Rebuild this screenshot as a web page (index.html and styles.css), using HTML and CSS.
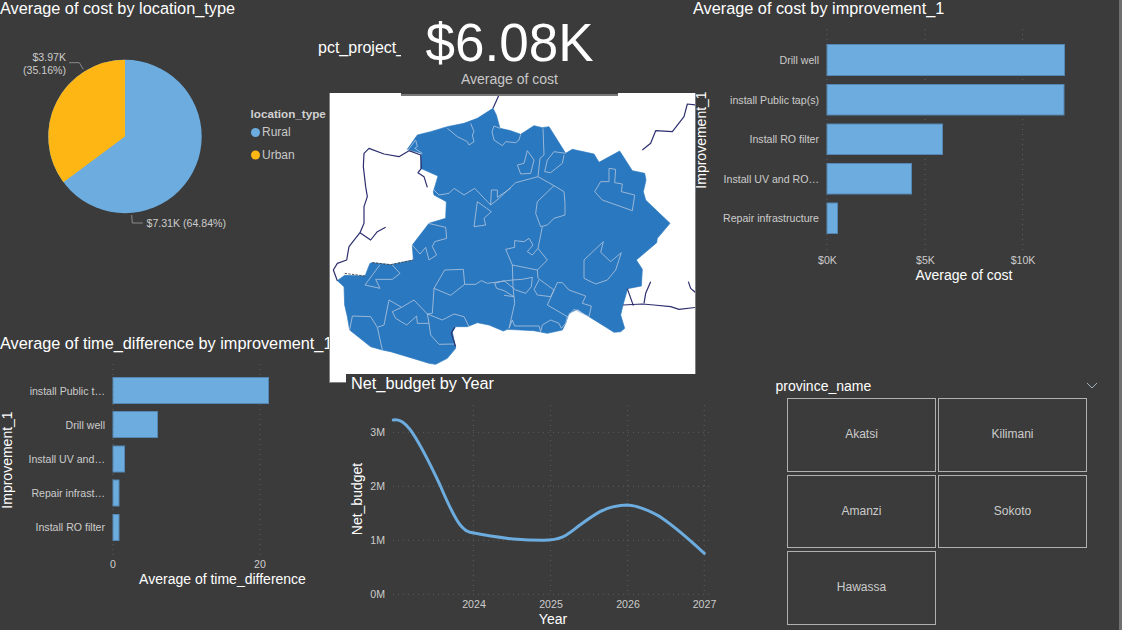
FILE: index.html
```html
<!DOCTYPE html>
<html lang="en">
<head>
<meta charset="utf-8">
<title>Water project dashboard</title>
<link rel="stylesheet" href="styles.css">
</head>
<body>
<main class="dash">

  <section class="tile tile-pie">
    <h2 class="title">Average of cost by location_type</h2>
    <svg class="chart" width="329" height="317" viewBox="0 18 329 317">
      <circle cx="125" cy="136.5" r="76.7" class="fill-blue"/>
      <path d="M125 136.5 L63.4 182.2 A76.7 76.7 0 0 1 125 59.8 Z" class="fill-amber"/>
      <path d="M69 62.7 H79.3 L83.3 69.3" class="leader"/>
      <path d="M131.7 215 L132.3 223 H142.7" class="leader"/>
      <text x="66" y="61" text-anchor="end" class="tick">$3.97K</text>
      <text x="66" y="73.5" text-anchor="end" class="tick">(35.16%)</text>
      <text x="146.5" y="226.5" class="tick">$7.31K (64.84%)</text>
      <text x="250.5" y="118" class="legend-head">location_type</text>
      <circle cx="255.5" cy="132.5" r="4.5" class="fill-blue"/>
      <text x="262" y="136" class="legend">Rural</text>
      <circle cx="255.5" cy="155" r="4.5" class="fill-amber"/>
      <text x="262" y="159" class="legend">Urban</text>
    </svg>
  </section>

  <section class="tile tile-time">
    <h2 class="title">Average of time_difference by improvement_1</h2>
    <svg class="chart" width="329" height="277" viewBox="0 353 329 277">
      <path d="M113 364 V556 M260 364 V556" class="grid"/>
      <rect x="113" y="377.5" width="155.5" height="26" class="bar"/>
      <rect x="113" y="411.5" width="44.5" height="26" class="bar"/>
      <rect x="113" y="446" width="11.5" height="26" class="bar"/>
      <rect x="113" y="480" width="6" height="26" class="bar"/>
      <rect x="113" y="514.5" width="6" height="26" class="bar"/>
      <text x="105" y="395" text-anchor="end" class="tick">install Public t…</text>
      <text x="105" y="429" text-anchor="end" class="tick">Drill well</text>
      <text x="105" y="463" text-anchor="end" class="tick">Install UV and…</text>
      <text x="105" y="497" text-anchor="end" class="tick">Repair infrast…</text>
      <text x="105" y="531" text-anchor="end" class="tick">Install RO filter</text>
      <text x="113" y="568" text-anchor="middle" class="tick">0</text>
      <text x="260" y="568" text-anchor="middle" class="tick">20</text>
      <text x="222.5" y="584" text-anchor="middle" class="axis">Average of time_difference</text>
      <text transform="translate(11.7 460) rotate(-90)" text-anchor="middle" class="axis">Improvement_1</text>
    </svg>
  </section>

  <figure class="map">
    <svg width="366" height="289" viewBox="28 279 1098 867">
      <path class="land" d="M517 325 527 345 538 385 570 392 600 403 640 377 665 383 685 380 735 460 755 448 820 462 835 487 897 453 935 512 972 520 976 540 968 575 975 600 985 610 1048 670 1010 715 1008 728 947 780 965 808 962 858 921 866 907 915 900 945 912 985 900 995 880 997 850 978 805 950 770 928 745 940 735 970 725 990 680 1000 640 992 560 988 548 993 505 975 470 968 440 980 405 980 395 995 405 1045 380 1075 345 1093 325 1090 270 1073 210 1055 185 1050 150 1040 87 990 80 950 72 915 70 860 50 842 72 826 133 828 148 790 155 788 210 794 278 780 275 735 325 670 375 655 377 605 340 585 338 575 352 528 300 505 302 460 260 448 290 405 330 395 380 380 430 370 470 355Z"/>
      <g class="borders">
        <path d="M380 385 410 410 440 425 445 435 460 425 455 405 460 395 450 370"/>
        <path d="M538 385 520 378 514 395 520 420 545 437 555 425 585 428 595 420 600 403"/>
        <path d="M620 452 610 490 590 495 600 522 630 520 640 480Z"/>
        <path d="M667 385 670 465 658 475 652 530 585 548 535 595 510 615"/>
        <path d="M735 460 700 455 680 480 672 515 690 518 725 490 730 465"/>
        <path d="M652 530 700 557 730 575 733 610 733 645 700 655 680 675 660 680 645 640 650 605 700 557"/>
        <path d="M665 680 652 745 680 780 650 810 575 795 555 748 582 742 582 722 610 725 625 715 637 735 620 755 635 765 652 745"/>
        <path d="M575 795 577 860 582 910 565 985"/>
        <path d="M650 810 652 835 700 870 690 890 650 885 640 868 655 840"/>
        <path d="M710 848 680 915 740 950 760 928 805 950 812 918 785 910 795 888 745 870 725 848Z"/>
        <path d="M340 865 372 810 428 808 432 853 390 886 340 865 335 940 320 942"/>
        <path d="M432 853 465 853 482 842 500 850 575 840 605 838 635 832 632 860 615 880 585 870 550 842 522 850 528 865 550 872 580 890 550 886"/>
        <path d="M323 670 375 682 378 715 342 725 335 740 348 765 325 780 315 742 298 762 275 735"/>
        <path d="M460 680 470 605 512 635 490 655 495 675Z"/>
        <path d="M790 780 848 725 840 757 870 785 902 758 885 810 860 840 825 852 790 835Z"/>
        <path d="M865 505 885 508 882 548 905 552 902 575 942 585 935 632 845 600 822 575 840 545 865 545Z"/>
        <path d="M212 792 238 820 215 838 165 838 178 865 133 855 178 794"/>
        <path d="M205 900 190 975 170 982 150 950 95 948 87 990 M170 982 185 1050"/>
        <path d="M205 900 243 922 280 900 320 942 325 970 290 970 288 948 258 975 225 955 215 935 243 922"/>
        <path d="M320 942 365 960 400 942 430 950 445 980 M325 970 330 1005 355 1033 400 1032"/>
        <path d="M565 985 575 960 582 978 655 978 660 995 665 975 690 960 715 970 722 985 735 970 740 950"/>
        <path d="M340 570 355 585 385 580 400 565 430 585 462 565 510 615 512 570 530 570 530 592 570 565"/>
        <path d="M262 450 285 420 290 440 282 445 305 460"/>
      </g>
      <g class="rivers">
        <path d="M535 285 517 325"/>
        <path d="M265 452 235 470 190 462 145 445 130 460 128 500 135 560 140 590 130 620 130 670 118 698 85 740 78 780 50 790 38 810 50 842"/>
        <path d="M118 698 150 720 170 695 195 682"/>
        <path d="M265 452 300 465 302 505 292 518 310 530 320 562"/>
        <path d="M1127 315 1100 312 1090 350 1055 395 1005 392 990 430 965 450"/>
        <path d="M907 915 965 912 1000 915 1050 920 1075 928 1127 922"/>
        <path d="M920 866 938 917"/>
        <path d="M970 910 975 880 990 845"/>
        <path d="M1103 845 1110 865 1127 880"/>
        <path d="M402 982 392 1000 405 1040"/>
        <path d="M155 788 210 794 278 780" class="dashed"/>
        <path d="M72 820 133 828" class="dashed"/>
      </g>
    </svg>
  </figure>

  <section class="tile tile-card">
    <h2 class="title pct">pct_project_</h2>
    <div class="card">
      <strong class="card-value">$6.08K</strong>
      <span class="card-label">Average of cost</span>
    </div>
  </section>

  <section class="tile tile-line">
    <h2 class="title title-line">Net_budget by Year</h2>
    <svg class="chart" width="384" height="237" viewBox="346 393 384 237">
      <path d="M393 432.3 H711 M393 486.3 H711 M393 540.3 H711 M393 594.3 H711 M473.3 405 V594 M550.7 405 V594 M627.7 405 V594 M704.3 405 V594" class="grid"/>
      <g transform="translate(340 370) scale(.33333)">
        <path class="curve" d="M160 150 C175 146 192 155 210 178 C232 208 265 270 300 345 C320 392 345 450 365 470 C375 481 380 484 390 487 C420 493 480 503 520 507 C555 510 590 511 610 511 C635 511 650 509 670 500 C690 490 700 480 720 465 C745 447 765 433 780 425 C805 412 835 405 863 405 C895 407 925 420 960 440 C990 460 1050 510 1093 550"/>
      </g>
      <text x="385" y="436" text-anchor="end" class="tick">3M</text>
      <text x="385" y="490" text-anchor="end" class="tick">2M</text>
      <text x="385" y="544" text-anchor="end" class="tick">1M</text>
      <text x="385" y="598" text-anchor="end" class="tick">0M</text>
      <text x="474" y="608" text-anchor="middle" class="tick">2024</text>
      <text x="551" y="608" text-anchor="middle" class="tick">2025</text>
      <text x="628" y="608" text-anchor="middle" class="tick">2026</text>
      <text x="704.5" y="608" text-anchor="middle" class="tick">2027</text>
      <text x="553" y="624" text-anchor="middle" class="axis">Year</text>
      <text transform="translate(362.3 499) rotate(-90)" text-anchor="middle" class="axis">Net_budget</text>
    </svg>
  </section>

  <section class="tile tile-bars">
    <h2 class="title">Average of cost by improvement_1</h2>
    <svg class="chart" width="426" height="317" viewBox="693 18 426 317">
      <path d="M827 29 V251 M925 29 V251 M1022.5 29 V251" class="grid"/>
      <rect x="827" y="44.5" width="237.5" height="31" class="bar"/>
      <rect x="827" y="84.5" width="237" height="30.5" class="bar"/>
      <rect x="827" y="124" width="115.5" height="30.5" class="bar"/>
      <rect x="827" y="163.5" width="84.5" height="30.5" class="bar"/>
      <rect x="827" y="203" width="10.5" height="30.5" class="bar"/>
      <text x="819" y="64" text-anchor="end" class="tick">Drill well</text>
      <text x="819" y="104" text-anchor="end" class="tick">install Public tap(s)</text>
      <text x="819" y="143" text-anchor="end" class="tick">Install RO filter</text>
      <text x="819" y="183" text-anchor="end" class="tick">Install UV and RO…</text>
      <text x="819" y="222" text-anchor="end" class="tick">Repair infrastructure</text>
      <text x="827.5" y="264" text-anchor="middle" class="tick">$0K</text>
      <text x="925.5" y="264" text-anchor="middle" class="tick">$5K</text>
      <text x="1023" y="264" text-anchor="middle" class="tick">$10K</text>
      <text x="964" y="280" text-anchor="middle" class="axis">Average of cost</text>
      <text transform="translate(705.7 140) rotate(-90)" text-anchor="middle" class="axis">Improvement_1</text>
    </svg>
  </section>

  <section class="tile tile-slicer">
    <header class="slicer-head">
      <h2 class="slicer-title">province_name</h2>
      <svg class="chevron" width="12" height="7" viewBox="0 0 12 7"><path d="M1 1 L6 6 L11 1"/></svg>
    </header>
    <div class="slicer-grid">
      <button class="chip">Akatsi</button>
      <button class="chip">Kilimani</button>
      <button class="chip">Amanzi</button>
      <button class="chip">Sokoto</button>
      <button class="chip">Hawassa</button>
    </div>
  </section>

</main>
</body>
</html>
```

FILE: styles.css
```css
* { box-sizing: border-box; }

html, body {
  margin: 0;
  height: 100%;
  overflow: hidden;
  background: #3b3b3b;
}

body, button, svg text {
  font-family: "Liberation Sans", Arial, sans-serif;
}

.dash {
  width: 1122px;
  height: 630px;
  display: grid;
  grid-template-columns: 329px 17px 347px 3px 34px 389px;
  grid-template-rows: 93px 242px 39px 9px 247px;
  border-right: 3px solid #6f6f6f;
}

.tile { min-width: 0; }

.title {
  margin: 0;
  height: 18px;
  font-size: 16.3px;
  line-height: 17px;
  font-weight: 400;
  color: #fff;
  white-space: nowrap;
}

.chart { display: block; }

/* tile placement */
.tile-pie    { grid-column: 1; grid-row: 1 / 3; }
.tile-time   { grid-column: 1; grid-row: 3 / 6; }
.map         { grid-column: 2 / 5; grid-row: 2 / 5; }
.tile-card   { grid-column: 1 / 4; grid-row: 1; }
.tile-line   { grid-column: 3 / 6; grid-row: 4 / 6; }
.tile-bars   { grid-column: 4 / 7; grid-row: 1 / 3; }
.tile-slicer { grid-column: 6; grid-row: 4 / 6; }

/* map */
.map {
  margin: 0;
  background: #fff;
  border: 1px solid #808080;
  border-top: 0;
  overflow: hidden;
}
.map svg { display: block; }
.land { fill: #2a78bf; stroke: #2a78bf; stroke-width: 2; stroke-linejoin: round; }
.borders path { fill: none; stroke: #a9c0dc; stroke-width: 2.6; stroke-linejoin: round; }
.rivers path { fill: none; stroke: #2c2f6e; stroke-width: 3.6; stroke-linejoin: round; }
.rivers .dashed { stroke: #3b3b3b; stroke-width: 2.6; stroke-dasharray: 7 4; }

/* KPI card */
.tile-card {
  display: flex;
  align-items: flex-start;
  padding-left: 318px;
  height: 96px;
}
.pct { margin-top: 39px; width: 83px; font-size: 16px; line-height: 18px; }
.card {
  width: 217px;
  height: 96px;
  display: flex;
  flex-direction: column;
  align-items: center;
  padding-top: 13px;
  background: #3b3b3b;
  border-bottom: 2px solid #787878;
}
.card-value {
  font-size: 53px;
  line-height: 60px;
  font-weight: 400;
  color: #fff;
}
.card-label {
  font-size: 14px;
  line-height: 16px;
  color: #c8c8c8;
  margin-top: -2px;
}

/* line tile */
.tile-line { background: #3b3b3b; padding-top: 1px; }
.title-line { padding-left: 5px; }

/* chart parts */
.tick { font-size: 10.6px; fill: #ccc; }
.axis { font-size: 14px; fill: #fff; }
.legend-head { font-size: 11.7px; font-weight: 700; fill: #d0d0d0; }
.legend { font-size: 12px; fill: #c8c8c8; }
.fill-blue { fill: #6cacdf; }
.fill-amber { fill: #fdb614; }
.leader { fill: none; stroke: #8a8a8a; stroke-width: 1; }
.grid { fill: none; stroke: #5e5e5e; stroke-width: 1; stroke-dasharray: 1 4; }
.bar { fill: #6cacdf; stroke: #5487b3; stroke-width: 1; }
.curve { fill: none; stroke: #6cacdf; stroke-width: 9; stroke-linecap: round; }

/* slicer */
.tile-slicer {
  padding: 4px 0 0 45.5px;
}
.slicer-head {
  display: flex;
  align-items: center;
  justify-content: space-between;
  width: 322px;
  height: 16px;
}
.slicer-title {
  margin: 0;
  font-size: 14px;
  line-height: 16px;
  font-weight: 400;
  color: #fff;
}
.chevron { fill: none; stroke: #9fb0bf; stroke-width: 1; margin-bottom: 2px; }
.slicer-grid {
  display: grid;
  grid-template-columns: 149px 149px;
  grid-auto-rows: 73.5px;
  gap: 3px 2px;
  margin: 4px 0 0 11.5px;
}
.chip {
  padding: 0 0 1px;
  background: transparent;
  border: 1px solid #b0b0b0;
  color: #ccc;
  font-size: 12px;
}
```
